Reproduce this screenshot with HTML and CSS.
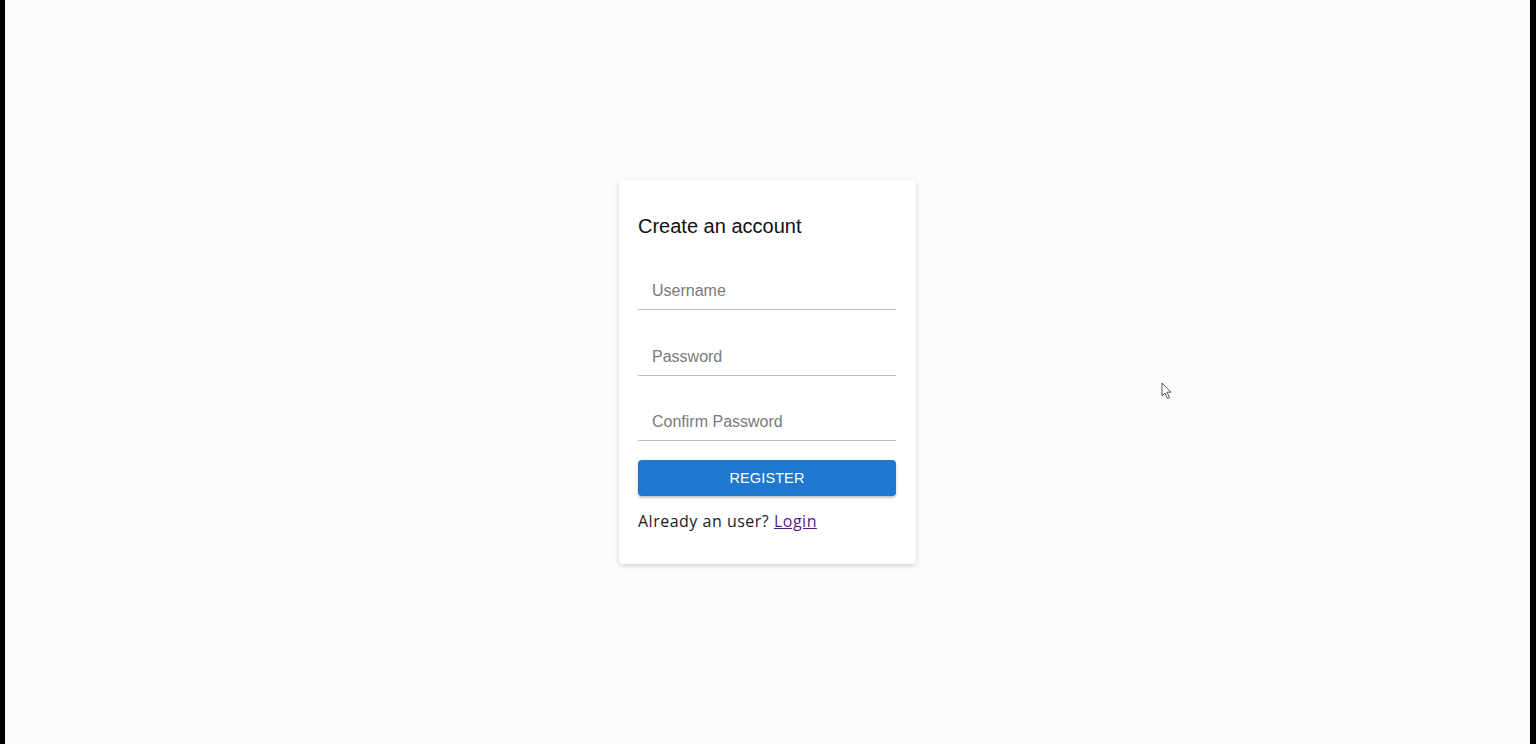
FILE: index.html
```html
<!DOCTYPE html>
<html lang="en">
<head>
<meta charset="utf-8">
<title>Create an account</title>
<link rel="stylesheet" href="styles.css">
</head>
<body>
<div class="screen">
  <main class="page">
    <form class="card">
      <h2 class="card-title">Create an account</h2>
      <div class="field"><input class="field-input" type="text" placeholder="Username"></div>
      <div class="field"><input class="field-input" type="password" placeholder="Password"></div>
      <div class="field"><input class="field-input" type="password" placeholder="Confirm Password"></div>
      <button class="btn-register" type="button">REGISTER</button>
      <p class="login-line">Already an user? <a class="login-link" href="#">Login</a></p>
    </form>
    <svg class="cursor" width="12" height="18" viewBox="0 0 12 18" aria-hidden="true">
      <path d="M1 1 L1 14 L4 11 L6.5 16.5 L8.5 15.6 L6 10.2 L10 10.2 Z" fill="#fff" stroke="#555" stroke-width="1" stroke-linejoin="round"/>
    </svg>
  </main>
</div>
</body>
</html>
```
FILE: styles.css
```css
html, body {
  margin: 0;
  padding: 0;
  height: 100%;
  background: #000;
}

.screen {
  height: 744px;
  padding: 0 6px 0 5px;
  display: flex;
}

.page {
  position: relative;
  flex: 1;
  background: #fcfcfc;
  display: flex;
  align-items: center;
  justify-content: center;
}

.card {
  width: 297px;
  height: 384px;
  box-sizing: border-box;
  padding: 34px 20px 0 19px;
  background: #fff;
  border-radius: 4px;
  box-shadow: 0 2px 4px rgba(0,0,0,0.12), 0 1px 10px rgba(0,0,0,0.06);
  display: flex;
  flex-direction: column;
  font-family: "Liberation Sans", Arial, sans-serif;
}

.card-title {
  margin: 0;
  font-size: 20px;
  line-height: 24px;
  font-weight: 400;
  color: #111;
}

.field {
  margin-top: 28px;
}
.field:first-of-type {
  margin-top: 34px;
}
.field:nth-of-type(3) {
  margin-top: 27px;
}

.field-input {
  display: block;
  width: 100%;
  box-sizing: border-box;
  height: 38px;
  border: 0;
  border-bottom: 1px solid #bdbdbd;
  background: transparent;
  padding: 0 14px;
  font-family: "Liberation Sans", Arial, sans-serif;
  font-size: 16px;
  color: #222;
  outline: none;
}
.field-input::placeholder {
  color: #7a7a7a;
}

.btn-register {
  margin-top: 19px;
  height: 36px;
  width: 100%;
  border: 0;
  border-radius: 4px;
  background: #1e78d0;
  color: #fff;
  font-family: "Liberation Sans", Arial, sans-serif;
  font-size: 14.5px;
  letter-spacing: 0.1px;
  box-shadow: 0 2px 2px rgba(0,0,0,0.18), 0 1px 4px rgba(0,0,0,0.08);
  cursor: pointer;
}

.login-line {
  margin: 13px 0 0;
  font-family: "Open Sans", "Noto Sans", sans-serif;
  font-size: 16px;
  line-height: 24px;
  letter-spacing: 0.5px;
  color: #1a1a1a;
}

.login-link {
  color: #551a8b;
  text-decoration: underline;
}

.cursor {
  position: absolute;
  left: 1156px;
  top: 382px;
}
```
